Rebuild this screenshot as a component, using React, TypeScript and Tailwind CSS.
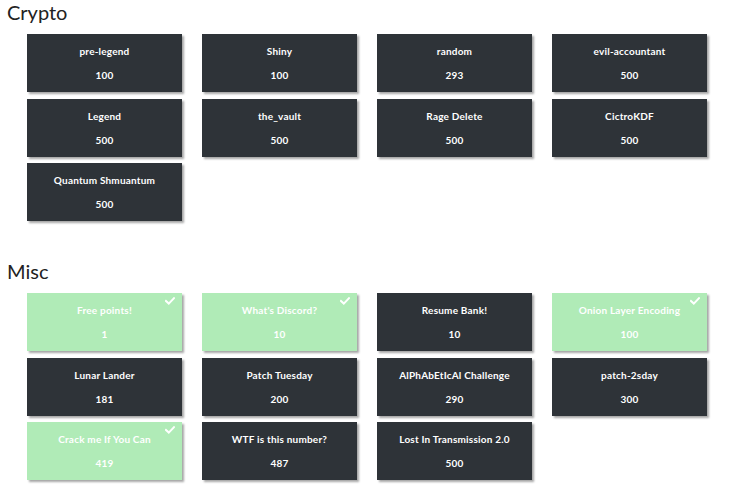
import React from 'react';

type Challenge = { name: string; points: number; solved?: boolean };

const sections: { title: string; items: Challenge[] }[] = [
  {
    title: 'Crypto',
    items: [
      { name: 'pre-legend', points: 100 },
      { name: 'Shiny', points: 100 },
      { name: 'random', points: 293 },
      { name: 'evil-accountant', points: 500 },
      { name: 'Legend', points: 500 },
      { name: 'the_vault', points: 500 },
      { name: 'Rage Delete', points: 500 },
      { name: 'CictroKDF', points: 500 },
      { name: 'Quantum Shmuantum', points: 500 },
    ],
  },
  {
    title: 'Misc',
    items: [
      { name: 'Free points!', points: 1, solved: true },
      { name: "What's Discord?", points: 10, solved: true },
      { name: 'Resume Bank!', points: 10 },
      { name: 'Onion Layer Encoding', points: 100, solved: true },
      { name: 'Lunar Lander', points: 181 },
      { name: 'Patch Tuesday', points: 200 },
      { name: 'AlPhAbEtIcAl Challenge', points: 290 },
      { name: 'patch-2sday', points: 300 },
      { name: 'Crack me If You Can', points: 419, solved: true },
      { name: 'WTF is this number?', points: 487 },
      { name: 'Lost In Transmission 2.0', points: 500 },
    ],
  },
];

const CheckMark = () => (
  <svg className="absolute top-[4px] right-[7px] w-[10px] h-[8px]" viewBox="0 0 10 8" fill="none">
    <path d="M1 4 L3.8 6.6 L9 1.2" stroke="white" strokeWidth="2" strokeLinecap="square" />
  </svg>
);

const ChallengeCard: React.FC<{ item: Challenge }> = ({ item }) => (
  <div
    className={`relative h-[58px] flex flex-col items-center pt-[11px] gap-3 text-white text-[10px] leading-[12px] font-bold shadow-[2px_2px_2px_rgba(0,0,0,0.35)] ${
      item.solved ? 'bg-[#b0ebb7]' : 'bg-[#2e3338]'
    }`}
  >
    {item.solved && <CheckMark />}
    <span className="tracking-[0.2px]">{item.name}</span>
    <span className="tracking-[0.2px]">{item.points}</span>
  </div>
);

export default function App() {
  return (
    <div className="w-[735px] min-h-[496px] bg-white font-['Lato','Liberation_Sans',sans-serif]">
      {sections.map((s) => (
        <section key={s.title} className="pb-[38px]">
          <h2 className="pl-[7px] text-[20px] leading-[24px] text-[#222] font-normal">{s.title}</h2>
          <div className="mt-[10px] ml-[27px] w-[680px] grid grid-cols-4 gap-x-5 gap-y-[6.5px]">
            {s.items.map((it) => (
              <ChallengeCard key={it.name} item={it} />
            ))}
          </div>
        </section>
      ))}
    </div>
  );
}
